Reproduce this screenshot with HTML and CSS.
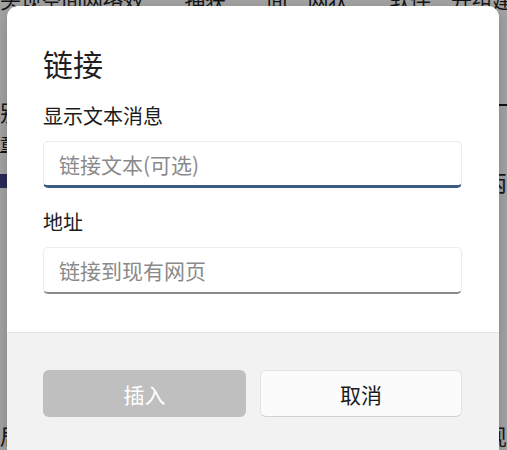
FILE: index.html
```html
<!DOCTYPE html>
<html lang="zh-CN">
<head>
<meta charset="utf-8">
<link rel="stylesheet" href="styles.css">
<title>链接</title>
</head>
<body>
<div class="page">
  <div class="bg-row bg-top">头现空间网络效　　捕获　　间　网状　　软件　开组建空</div>
  <div class="bg-row bg-r2"><span>别</span><span class="rule"></span></div>
  <div class="bg-row bg-r3"><span class="ul">童</span><span></span></div>
  <div class="bg-row bg-r4"><span class="blk"></span><span>丙</span></div>
  <div class="bg-row bg-r5"><span>局</span><span>现</span></div>
</div>

<div class="dialog" role="dialog" aria-label="链接">
  <div class="dialog-body">
    <h1 class="title">链接</h1>
    <label class="label" for="t1">显示文本消息</label>
    <input id="t1" class="field focused" type="text" placeholder="链接文本(可选)">
    <label class="label second" for="t2">地址</label>
    <input id="t2" class="field" type="text" placeholder="链接到现有网页">
  </div>
  <div class="dialog-footer">
    <button class="btn primary" disabled>插入</button>
    <button class="btn secondary">取消</button>
  </div>
</div>
</body>
</html>
```

FILE: styles.css
```css
* { box-sizing: border-box; }

html, body {
  margin: 0;
  padding: 0;
  width: 507px;
  height: 450px;
  overflow: hidden;
}

body {
  background: #a4a4a4;
  font-family: "Noto Sans CJK SC", "Noto Sans", sans-serif;
  color: #111;
  position: relative;
}

.page {
  display: flex;
  flex-direction: column;
  width: 507px;
  overflow: hidden;
}

.bg-row {
  display: flex;
  justify-content: space-between;
  font-size: 22px;
  line-height: 26px;
  color: #151515;
  white-space: nowrap;
  overflow: hidden;
}

.bg-top {
  margin-top: -14px;
  font-size: 21px;
  letter-spacing: -0.5px;
}

.bg-r2 { margin-top: 86px; }
.bg-r2 .rule {
  width: 20px;
  height: 22px;
  border-top: 2px solid #111;
  margin-top: 6px;
}
.bg-r3 { margin-top: 4px; font-size: 18px; }
.bg-r3 .ul { text-decoration: underline; }
.bg-r4 { margin-top: 12px; }
.bg-r4 .blk {
  background: #2a2a5a;
  width: 8px;
  height: 14px;
  margin-top: 6px;
}
.bg-r5 { margin-top: 228px; }

.dialog {
  position: absolute;
  left: 7px;
  top: 6px;
  width: 492px;
  height: 444px;
  background: #ffffff;
  border-radius: 11px 11px 0 0;
  overflow: hidden;
  display: flex;
  flex-direction: column;
  box-shadow: 0 4px 16px rgba(0,0,0,0.2);
}

.dialog-body {
  display: flex;
  flex-direction: column;
  padding: 39px 36px 0 36px;
  height: 326px;
}

.title {
  margin: 0;
  font-size: 30px;
  line-height: 36px;
  font-weight: 400;
  color: #1f1f1f;
}

.label {
  margin-top: 22px;
  font-size: 20px;
  line-height: 26px;
  color: #1b1b1b;
}

.label.second { margin-top: 21px; }

.field {
  margin-top: 12px;
  width: 419px;
  height: 47px;
  border: 1px solid #ececec;
  border-bottom: 2px solid #8a8a8a;
  border-radius: 5px;
  background: #ffffff;
  padding: 0 15px;
  font-family: inherit;
  font-size: 21px;
  color: #1b1b1b;
  outline: none;
}

.field.focused {
  border-bottom: 3px solid #3c5b83;
}

.field::placeholder {
  color: #8a8a8a;
}

.dialog-footer {
  flex: 1;
  background: #f2f2f2;
  border-top: 1px solid #e3e3e3;
  display: grid;
  grid-template-columns: 203px 202px;
  column-gap: 14px;
  align-content: start;
  padding: 37px 36px 0 36px;
}

.btn {
  height: 47px;
  border-radius: 6px;
  font-family: inherit;
  font-size: 21px;
  line-height: 26px;
  padding: 0;
}

.btn.primary {
  background: #bfbfbf;
  color: #ffffff;
  border: none;
}

.btn.secondary {
  background: #fbfbfb;
  color: #1b1b1b;
  border: 1px solid #e3e3e3;
  border-bottom-color: #d2d2d2;
}
```
